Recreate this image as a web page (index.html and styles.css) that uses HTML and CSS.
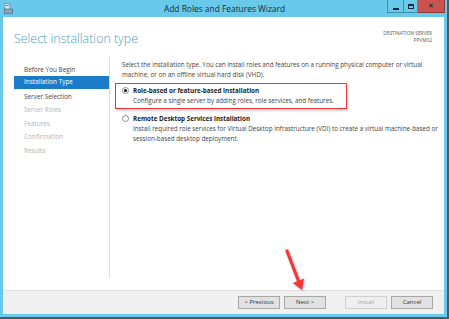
FILE: index.html
```html
<!DOCTYPE html>
<html>
<head>
<meta charset="utf-8">
<link rel="stylesheet" href="styles.css">
</head>
<body>
<div class="window">
  <div class="titlebar">
    <svg class="app-icon" width="9" height="11" viewBox="0 0 9 11">
      <rect x="1" y="0.5" width="5" height="7" fill="#d9ecf6" stroke="#6f8fa6" stroke-width="0.8"/>
      <rect x="0.5" y="6" width="8" height="4.5" fill="#8aa4b8" stroke="#5a7487" stroke-width="0.8"/>
      <rect x="2" y="2" width="3" height="1" fill="#4a86b8"/>
    </svg>
    <div class="title">Add Roles and Features Wizard</div>
    <div class="controls">
      <div class="ctl ctl-min"><span class="min-glyph"></span></div>
      <div class="ctl ctl-max"><span class="max-glyph"></span></div>
      <div class="ctl ctl-close">✕</div>
    </div>
  </div>
  <div class="client">
    <div class="header">
      <h1 class="page-title">Select installation type</h1>
      <div class="dest">
        <div>DESTINATION SERVER</div>
        <div>PPVM02</div>
      </div>
    </div>
    <div class="main">
      <ul class="nav">
        <li class="nav-item">Before You Begin</li>
        <li class="nav-item active">Installation Type</li>
        <li class="nav-item">Server Selection</li>
        <li class="nav-item disabled">Server Roles</li>
        <li class="nav-item disabled">Features</li>
        <li class="nav-item disabled">Confirmation</li>
        <li class="nav-item disabled">Results</li>
      </ul>
      <div class="content">
        <p class="intro">Select the installation type. You can install roles and features on a running physical computer or virtual machine, or on an offline virtual hard disk (VHD).</p>
        <div class="option highlighted">
          <div class="opt-head"><span class="radio checked"></span><span class="opt-label">Role-based or feature-based installation</span></div>
          <div class="opt-desc">Configure a single server by adding roles, role services, and features.</div>
        </div>
        <div class="option">
          <div class="opt-head"><span class="radio"></span><span class="opt-label">Remote Desktop Services installation</span></div>
          <div class="opt-desc">Install required role services for Virtual Desktop Infrastructure (VDI) to create a virtual machine-based or session-based desktop deployment.</div>
        </div>
      </div>
    </div>
    <div class="footer">
      <button class="btn">&lt; Previous</button>
      <button class="btn">Next &gt;</button>
      <button class="btn btn-install" disabled>Install</button>
      <button class="btn">Cancel</button>
    </div>
  </div>
</div>
<svg class="arrow" width="34" height="52" viewBox="0 0 34 52">
  <line x1="7" y1="6" x2="18.4" y2="35.7" stroke="#f03a3a" stroke-width="3.2" stroke-linecap="round"/>
  <polygon points="12.8,37.9 24,33.5 22,45" fill="#f03a3a"/>
</svg>
</body>
</html>
```

FILE: styles.css
```css
* { box-sizing: border-box; }
html, body { margin: 0; padding: 0; }
body {
  width: 449px;
  height: 319px;
  background: #4d5b63;
  font-family: "Open Sans", "Noto Sans", sans-serif;
  position: relative;
  overflow: hidden;
}
.window {
  width: 447px;
  height: 317px;
  background: #69c9ea;
  display: flex;
  flex-direction: column;
}
.titlebar {
  height: 17px;
  position: relative;
  display: flex;
  align-items: center;
  justify-content: center;
}
.app-icon {
  position: absolute;
  left: 4px;
  top: 3px;
}
.title {
  font-size: 8.4px;
  color: #1c2a33;
  padding-left: 2px;
  margin-top: -1px;
}
.controls {
  position: absolute;
  right: 2px;
  top: 0;
  display: flex;
}
.ctl {
  height: 13px;
  display: flex;
  align-items: center;
  justify-content: center;
  border: 1px solid #3f8fb0;
  border-top: none;
}
.ctl-min { width: 17px; }
.ctl-max { width: 14px; border-left: none; }
.ctl-close {
  width: 27px;
  background: #c85350;
  border-color: #8c3a38;
  border-left: none;
  color: #1a1a1a;
  font-size: 7px;
  font-weight: bold;
  font-family: "DejaVu Sans", sans-serif;
}
.min-glyph {
  width: 6px;
  height: 2px;
  background: #1a2a33;
  margin-top: 5px;
}
.max-glyph {
  width: 6px;
  height: 5px;
  border: 1px solid #1a2a33;
  border-top-width: 2px;
}
.client {
  flex: 1;
  margin: 0 3px 3px 3px;
  background: #ffffff;
  display: flex;
  flex-direction: column;
}
.header {
  height: 40px;
  display: flex;
  justify-content: space-between;
  align-items: flex-start;
  padding: 0 12px 0 11px;
}
.page-title {
  margin: 14px 0 0 0;
  font-size: 12.4px;
  font-weight: 300;
  color: #4e9cbf;
  line-height: 16px;
  white-space: nowrap;
}
.dest {
  margin-top: 13px;
  text-align: right;
  font-size: 4.8px;
  line-height: 7px;
  color: #555;
  white-space: nowrap;
}
.main {
  flex: 1;
  display: flex;
  padding-bottom: 12px;
}
.nav {
  list-style: none;
  margin: 0;
  width: 107px;
  padding: 5.5px 0 0 11px;
  border-right: 1px solid #dcdcdc;
}
.nav-item {
  height: 13.5px;
  line-height: 13.5px;
  padding-left: 10px;
  font-size: 6.4px;
  color: #444;
}
.nav-item.active {
  background: #1a7bc9;
  color: #fff;
  height: 12.5px;
  line-height: 12.5px;
  margin-bottom: 1px;
}
.nav-item.disabled { color: #b4b4b4; }
.content {
  flex: 1;
  padding: 3px 6px 0 5px;
  font-size: 6.3px;
  color: #444;
}
.intro {
  margin: 0 0 3px 7px;
  line-height: 10px;
}
.option {
  padding: 1px 0 2px 6px;
  border: 1px solid transparent;
  width: 232px;
}
.option.highlighted {
  border: 1.5px solid #e8363a;
  box-shadow: 1px 2px 2px rgba(0,0,0,0.18);
  margin-bottom: 2px;
}
.opt-head {
  display: flex;
  align-items: center;
  height: 10px;
}
.radio {
  width: 7px;
  height: 7px;
  border-radius: 50%;
  border: 1px solid #8a8a8a;
  background: #fff;
  margin-right: 4px;
  position: relative;
  flex-shrink: 0;
}
.radio.checked::after {
  content: "";
  position: absolute;
  left: 1px;
  top: 1px;
  width: 3px;
  height: 3px;
  border-radius: 50%;
  background: #111;
}
.opt-label {
  font-weight: bold;
  color: #222;
}
.opt-desc {
  margin: 1px 0 0 11px;
  line-height: 10px;
  width: 305px;
}
.footer {
  height: 24px;
  background: #f0f0f0;
  border-top: 1px solid #e0e0e0;
  display: flex;
  align-items: flex-start;
  justify-content: flex-end;
  padding: 5px 11px 0 0;
}
.btn {
  width: 42px;
  height: 13px;
  margin: 0 0 0 4px;
  padding: 0;
  background: #e1e1e1;
  border: 1px solid #a8a8a8;
  border-radius: 0;
  font-family: "Open Sans", "Noto Sans", sans-serif;
  font-size: 6px;
  color: #333;
  line-height: 11px;
}
.btn-install {
  margin-left: 19px;
  background: #efefef;
  border-color: #cfcfcf;
  color: #a8a8a8;
}
.arrow {
  position: absolute;
  left: 280px;
  top: 245px;
  filter: drop-shadow(1px 1px 1px rgba(0,0,0,0.3));
}
```
